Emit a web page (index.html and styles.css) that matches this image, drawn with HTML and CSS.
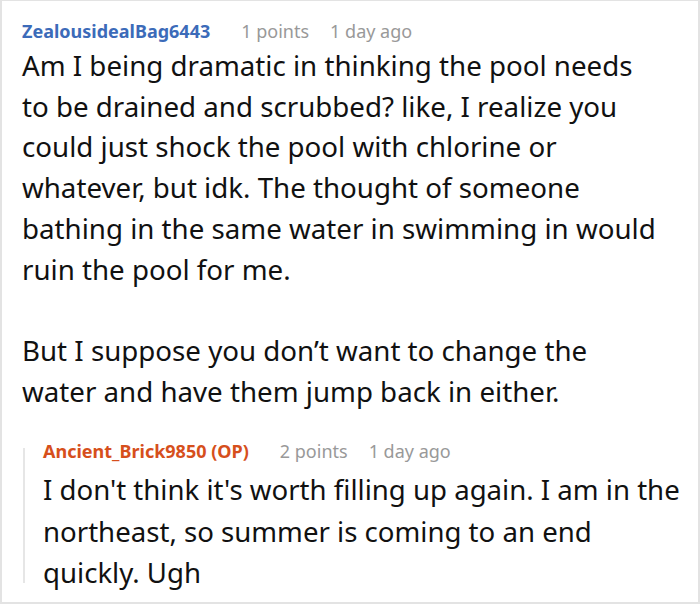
FILE: index.html
```html
<!DOCTYPE html>
<html>
<head>
<meta charset="utf-8">
<link rel="stylesheet" href="styles.css">
</head>
<body>
<div class="frame">
  <div class="comment">
    <div class="meta">
      <span class="author">ZealousidealBag6443</span>
      <span class="points">1 points</span>
      <span class="time">1 day ago</span>
    </div>
    <div class="body main-body">
      <p>Am I being dramatic in thinking the pool needs to be drained and scrubbed? like, I realize you could just shock the pool with chlorine or whatever, but idk. The thought of someone bathing in the same water in swimming in would ruin the pool for me.</p>
      <p>But I suppose you don’t want to change the water and have them jump back in either.</p>
    </div>
    <div class="reply">
      <div class="meta">
        <span class="author op">Ancient_Brick9850 (OP)</span>
        <span class="points">2 points</span>
        <span class="time">1 day ago</span>
      </div>
      <div class="body reply-body">
        <p>I don't think it's worth filling up again. I am in the northeast, so summer is coming to an end quickly. Ugh</p>
      </div>
    </div>
  </div>
</div>
</body>
</html>
```
FILE: styles.css
```css
html, body {
  margin: 0;
  padding: 0;
  background: #fff;
}
.frame {
  width: 700px;
  height: 604px;
  box-sizing: border-box;
  border: 2px solid #e3e3e3;
  border-top-width: 1px;
  background: #fff;
  overflow: hidden;
}
.comment {
  padding: 18px 0 0 20px;
  font-family: "Noto Sans", sans-serif;
}
.meta {
  display: flex;
  align-items: baseline;
  font-size: 18px;
  line-height: 24px;
}
.author {
  font-weight: 700;
  color: #3c6bb9;
  margin-right: 31px;
}
.author.op {
  color: #d64f1c;
}
.points, .time {
  color: #999;
  margin-right: 21px;
}
.body {
  color: #111;
  font-size: 27.7px;
  line-height: 40.7px;
  margin-top: 2px;
}
.main-body {
  width: 639px;
}
.body p {
  margin: 0 0 40.7px 0;
}
.body p:last-child {
  margin-bottom: 0;
}
.reply {
  position: relative;
  margin-top: 28px;
  padding-left: 21px;
}
.reply::before {
  content: "";
  position: absolute;
  left: 1px;
  top: 9px;
  bottom: 11px;
  width: 2px;
  background: #e6e6e6;
}
.reply-body {
  width: 650px;
  font-size: 27.6px;
  line-height: 41.5px;
  margin-top: 6px;
}
```
